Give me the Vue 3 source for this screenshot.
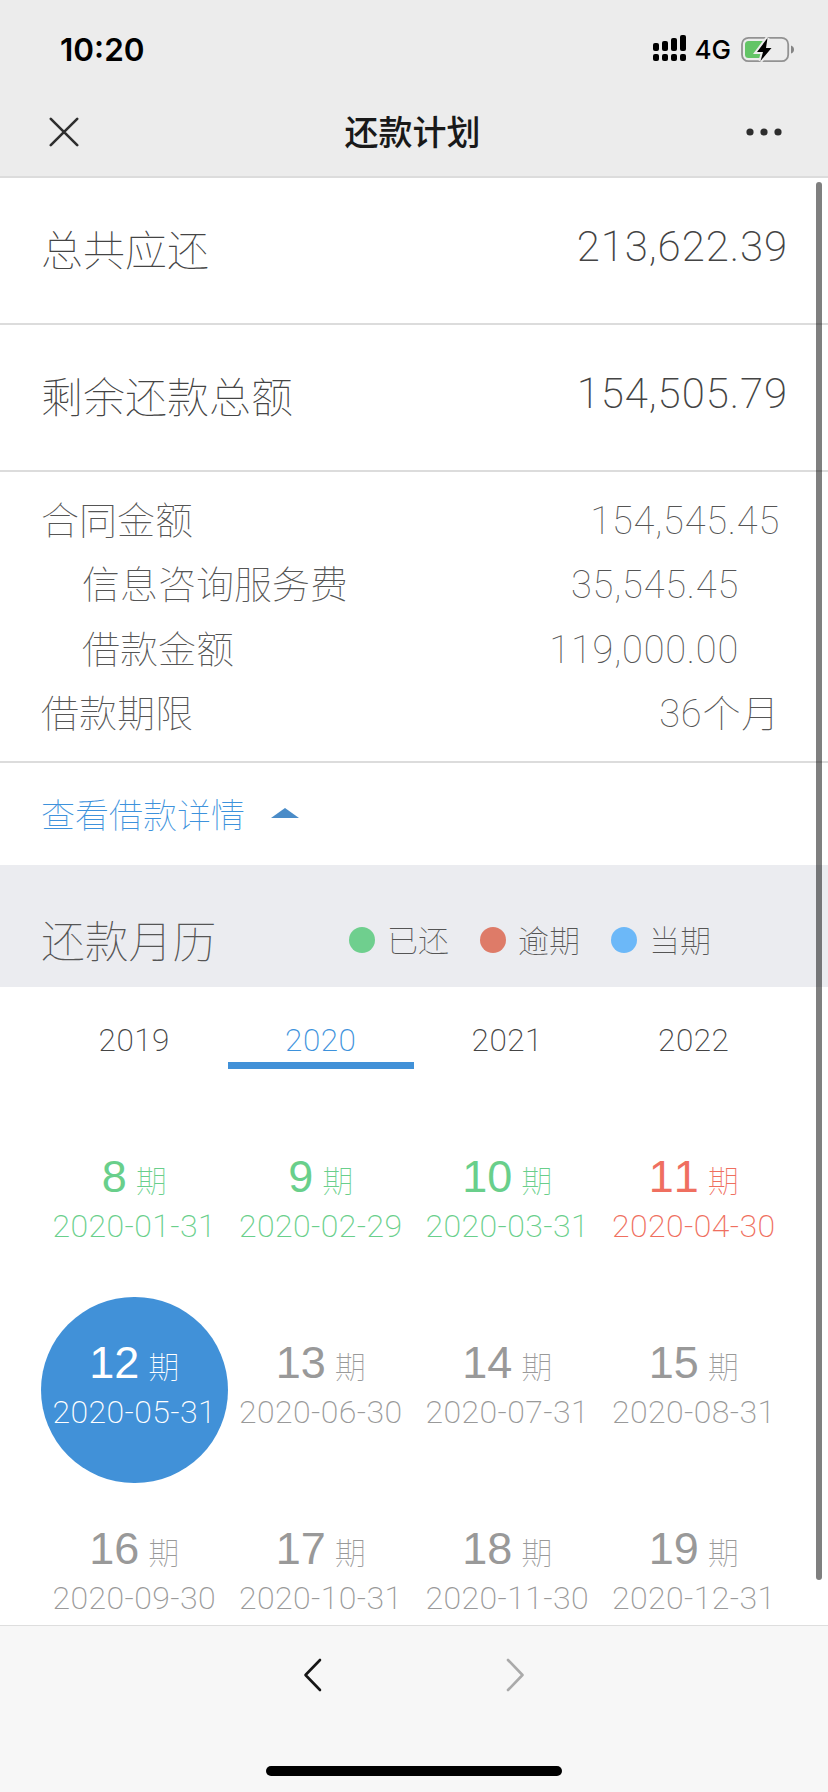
<script setup>
    import { ref } from 'vue'

    const summary = [
        { label: '总共应还', value: '213,622.39' },
        { label: '剩余还款总额', value: '154,505.79' }
    ]

    const details = [
        { label: '合同金额', value: '154,545.45' },
        { label: '信息咨询服务费', value: '35,545.45', sub: true },
        { label: '借款金额', value: '119,000.00', sub: true },
        { label: '借款期限', value: '36个月' }
    ]

    const legend = [
        { label: '已还', type: 'paid' },
        { label: '逾期', type: 'overdue' },
        { label: '当期', type: 'current' }
    ]

    const years = [2019, 2020, 2021, 2022]
    const activeYear = ref(2020)
    const showDetails = ref(true)

    const periods = [
        { no: 8, date: '2020-01-31', status: 'paid' },
        { no: 9, date: '2020-02-29', status: 'paid' },
        { no: 10, date: '2020-03-31', status: 'paid' },
        { no: 11, date: '2020-04-30', status: 'overdue' },
        { no: 12, date: '2020-05-31', status: 'current' },
        { no: 13, date: '2020-06-30', status: 'pending' },
        { no: 14, date: '2020-07-31', status: 'pending' },
        { no: 15, date: '2020-08-31', status: 'pending' },
        { no: 16, date: '2020-09-30', status: 'pending' },
        { no: 17, date: '2020-10-31', status: 'pending' },
        { no: 18, date: '2020-11-30', status: 'pending' },
        { no: 19, date: '2020-12-31', status: 'pending' }
    ]
</script>

<template>
    <div class="phone">
        <header class="header">
            <div class="status-bar">
                <span class="time">10:20</span>
                <div class="status-icons">
                    <svg class="signal" width="34" height="27" viewBox="0 0 34 27">
                        <rect x="0" y="8" width="6" height="8" rx="2" />
                        <rect x="9" y="6" width="6" height="10" rx="2" />
                        <rect x="18" y="3" width="6" height="13" rx="2" />
                        <rect x="27" y="0" width="6" height="16" rx="2" />
                        <rect v-for="i in 4" :key="i" :x="(i - 1) * 9" y="19" width="6" height="7" rx="2" />
                    </svg>
                    <span class="network">4G</span>
                    <svg class="battery" width="54" height="28" viewBox="0 0 54 28">
                        <rect x="1" y="2.8" width="46.2" height="23.4" rx="6.5" fill="none" stroke="#929292" stroke-width="1.8" />
                        <path d="M50 10.5 Q53 11.5 53 14.5 T50 18.5 Z" fill="#858585" />
                        <rect x="4" y="6" width="21" height="17" rx="3.5" fill="#63c466" />
                        <path d="M26.5 3 L16 17 H22 L19.5 26 L30.5 13 H25 Z" fill="#000" stroke="#ececec" stroke-width="4" paint-order="stroke" />
                    </svg>
                </div>
            </div>
            <div class="nav">
                <svg class="close" width="30" height="30" viewBox="0 0 30 30">
                    <path d="M1.8 1.8 L28.2 28.2 M28.2 1.8 L1.8 28.2" />
                </svg>
                <h1>还款计划</h1>
                <svg class="more" width="36" height="8" viewBox="0 0 36 8">
                    <circle cx="4" cy="4" r="3.6" />
                    <circle cx="18" cy="4" r="3.6" />
                    <circle cx="32" cy="4" r="3.6" />
                </svg>
            </div>
        </header>

        <main class="content">
            <div v-for="item in summary" :key="item.label" class="summary-row">
                <span class="summary-label">{{ item.label }}</span>
                <span class="summary-value">{{ item.value }}</span>
            </div>

            <div v-if="showDetails" class="details">
                <div v-for="item in details" :key="item.label" class="detail-row" :class="{ sub: item.sub }">
                    <span>{{ item.label }}</span>
                    <span class="detail-value">{{ item.value }}</span>
                </div>
            </div>

            <div class="toggle" @click="showDetails = !showDetails">
                <span>查看借款详情</span>
                <i class="caret" :class="{ down: !showDetails }"></i>
            </div>

            <div class="calendar-header">
                <h2>还款月历</h2>
                <div class="legend">
                    <div v-for="item in legend" :key="item.type" class="legend-item">
                        <i class="dot" :class="item.type"></i>
                        <span>{{ item.label }}</span>
                    </div>
                </div>
            </div>

            <div class="years">
                <div
                    v-for="year in years"
                    :key="year"
                    class="year"
                    :class="{ active: year === activeYear }"
                    @click="activeYear = year"
                >{{ year }}</div>
            </div>

            <div class="periods">
                <div v-for="p in periods" :key="p.no" class="period" :class="p.status">
                    <div class="period-no"><b>{{ p.no }}</b><span>期</span></div>
                    <div class="period-date">{{ p.date }}</div>
                </div>
            </div>

            <div class="scrollbar"></div>
        </main>

        <footer class="footer">
            <div class="footer-nav">
                <svg width="20" height="34" viewBox="0 0 20 34">
                    <path d="M17 2 L2.5 17 L17 32" stroke="#161616" />
                </svg>
                <svg width="20" height="34" viewBox="0 0 20 34">
                    <path d="M3 2 L17.5 17 L3 32" stroke="#aaaaaa" />
                </svg>
            </div>
            <div class="home-bar"></div>
        </footer>
    </div>
</template>

<style>
    body {
        margin: 0;
        overflow: hidden;
    }
</style>

<style scoped>
    .phone {
        width: 828px;
        height: 1792px;
        display: flex;
        flex-direction: column;
        overflow: hidden;
        background: #fff;
        color: #444;
        font-family: Roboto, "Noto Sans CJK SC", sans-serif;
        font-weight: 100;
    }

    .header {
        height: 176px;
        flex: none;
        background: #ececec;
        border-bottom: 2px solid #dcdcdc;
    }

    .status-bar {
        height: 100px;
        box-sizing: border-box;
        padding: 0 33px 2px 60px;
        display: flex;
        align-items: center;
        justify-content: space-between;
        color: #000;
        font-family: Inter, sans-serif;
    }

    .time {
        font-size: 31.5px;
        font-weight: 600;
    }

    .status-icons {
        display: flex;
        align-items: center;
    }

    .signal {
        margin-bottom: 2px;
    }

    .network {
        font-size: 26px;
        font-weight: 500;
        margin: 0 10px 0 8px;
    }

    .nav {
        height: 64px;
        padding: 0 49px;
        display: flex;
        align-items: center;
        justify-content: space-between;
    }

    .nav h1 {
        margin: 0;
        padding-bottom: 4px;
        font-size: 34px;
        font-weight: 500;
        color: #191919;
    }

    .close {
        fill: none;
        stroke: #2e2e2e;
        stroke-width: 2.6;
        stroke-linecap: round;
    }

    .more {
        margin-right: -3px;
        fill: #2e2e2e;
    }

    .content {
        position: relative;
        flex: 1;
        min-height: 0;
        overflow: hidden;
    }

    .summary-row {
        height: 145px;
        padding: 0 41px;
        display: flex;
        align-items: center;
        justify-content: space-between;
        border-bottom: 2px solid #dcdcdc;
        font-size: 42px;
        line-height: 60px;
    }

    .summary-label {
        padding-top: 2px;
    }

    .summary-value {
        padding-bottom: 7px;
        margin-right: -1px;
        font-weight: 180;
        letter-spacing: 0.9px;
    }

    .details {
        height: 289px;
        box-sizing: border-box;
        padding: 16.5px 48px 0 41px;
        font-size: 38px;
        color: #555;
    }

    .detail-row {
        height: 64.6px;
        line-height: 64.6px;
        display: flex;
        justify-content: space-between;
    }

    .detail-row.sub {
        padding: 0 41px;
    }

    .detail-value {
        font-weight: 150;
        letter-spacing: 0.8px;
    }

    .toggle {
        height: 102px;
        padding: 0 41px 0;
        display: flex;
        align-items: center;
        border-top: 2px solid #dcdcdc;
        font-size: 34px;
        color: #3d92dc;
    }

    .toggle span {
        padding-bottom: 2px;
    }

    .caret {
        margin-left: 26px;
        margin-bottom: 2px;
        border: 14px solid transparent;
        border-top: 0;
        border-bottom: 10px solid #4a8cc8;
    }

    .caret.down {
        transform: rotate(180deg);
    }

    .calendar-header {
        height: 122px;
        box-sizing: border-box;
        padding: 28px 41px 0;
        display: flex;
        align-items: center;
        background: #ebecf0;
        color: #555;
    }

    .calendar-header h2 {
        margin: 0;
        padding-bottom: 2px;
        width: 308px;
        font-size: 43.8px;
        font-weight: 100;
    }

    .legend {
        display: flex;
        gap: 31px;
        font-size: 31px;
    }

    .legend-item {
        display: flex;
        align-items: center;
        gap: 12px;
    }

    .legend-item span {
        padding-bottom: 4px;
    }

    .dot {
        width: 26px;
        height: 26px;
        border-radius: 50%;
    }

    .dot.paid {
        background: #6fcf8e;
    }

    .dot.overdue {
        background: #de7b68;
    }

    .dot.current {
        background: #6cb8f8;
    }

    .years {
        padding: 33px 41px 0;
        display: grid;
        grid-template-columns: repeat(4, 1fr);
    }

    .year {
        height: 42px;
        line-height: 42px;
        border-bottom: 7px solid transparent;
        text-align: center;
        font-size: 31.5px;
        font-weight: 200;
        letter-spacing: 0.5px;
    }

    .year.active {
        color: #3d92dc;
        border-bottom-color: #4191d8;
    }

    .periods {
        padding: 41.7px 41px 0;
        display: grid;
        grid-template-columns: repeat(4, 1fr);
        grid-auto-rows: 186.3px;
    }

    .period {
        box-sizing: border-box;
        padding-top: 39.2px;
        border-radius: 50%;
        text-align: center;
        color: #999;
    }

    .period.paid {
        color: #69cf8b;
    }

    .period.overdue {
        color: #ef6f60;
    }

    .period.current {
        background: #4191d8;
        color: #fff;
    }

    .period-no {
        height: 54px;
        display: flex;
        align-items: baseline;
        justify-content: center;
        gap: 9px;
        line-height: 54px;
    }

    .period-no b {
        font-family: "Liberation Sans", sans-serif;
        font-size: 45px;
        font-weight: 400;
        /* keeps the figures of 11 from kerning together */
        font-kerning: none;
    }

    .period-no span {
        font-size: 31px;
    }

    .period-date {
        font-size: 32px;
        font-weight: 200;
        line-height: 44px;
        letter-spacing: 0.4px;
        white-space: nowrap;
    }

    .scrollbar {
        position: absolute;
        top: 4px;
        right: 6px;
        width: 6px;
        height: 1398px;
        border-radius: 3px;
        background: rgba(0, 0, 0, 0.5);
    }

    .footer {
        height: 166px;
        flex: none;
        display: flex;
        flex-direction: column;
        align-items: center;
        justify-content: space-between;
        background: #f7f7f7;
        border-top: 1px solid #dedede;
    }

    .footer-nav {
        padding-top: 32px;
        display: flex;
        gap: 182px;
    }

    .footer-nav path {
        fill: none;
        stroke-width: 2.6;
        stroke-linecap: round;
        stroke-linejoin: round;
    }

    .home-bar {
        width: 296px;
        height: 10px;
        margin-bottom: 16px;
        border-radius: 5px;
        background: #000;
    }
</style>
